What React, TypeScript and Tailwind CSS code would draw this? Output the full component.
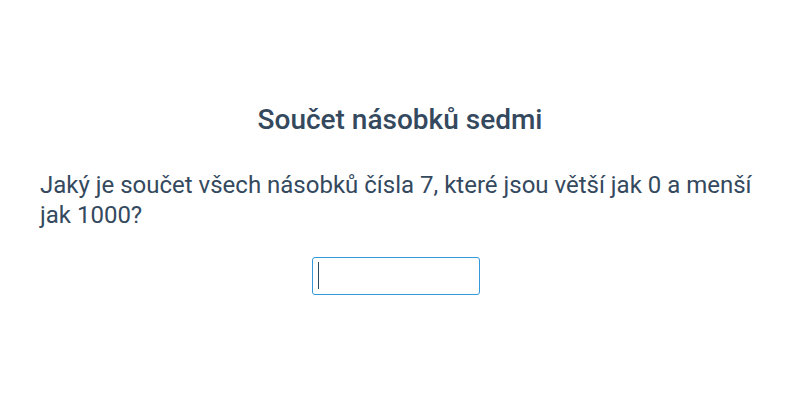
import { useState } from 'react'

export default function App() {
  const [answer, setAnswer] = useState('')

  return (
    <div className="min-h-[400px] bg-white px-10 pt-[104px] font-['Roboto',sans-serif] text-[#34495e]">
      <h1 className="text-center text-[28px] font-medium leading-[32px]">Součet násobků sedmi</h1>

      <p className="mt-[34px] text-[24px] leading-[30px]">
        Jaký je součet všech násobků čísla 7, které jsou větší jak 0 a menší jak 1000?
      </p>

      <div className="mt-[27px] flex justify-center pr-2">
        <div className="relative">
          <input
            autoFocus
            value={answer}
            onChange={(e) => setAnswer(e.target.value)}
            className="h-[38px] w-[168px] rounded-[3px] border border-[#3498db] px-[5px] text-[23px] text-[#34495e] caret-[#34495e] outline-none"
          />
          {/* caret shown while the field is empty */}
          {!answer && (
            <span className="pointer-events-none absolute left-[6px] top-[5px] h-[27px] w-px bg-[#34495e]" />
          )}
        </div>
      </div>
    </div>
  )
}
